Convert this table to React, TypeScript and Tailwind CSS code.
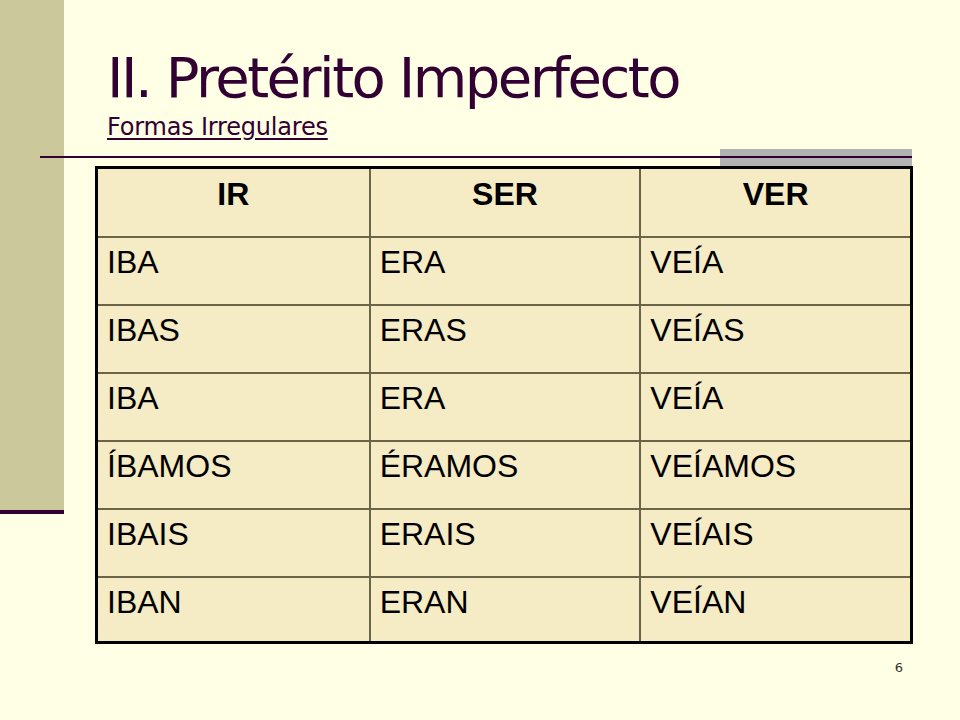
const rows = [
  ["IBA", "ERA", "VEÍA"],
  ["IBAS", "ERAS", "VEÍAS"],
  ["IBA", "ERA", "VEÍA"],
  ["ÍBAMOS", "ÉRAMOS", "VEÍAMOS"],
  ["IBAIS", "ERAIS", "VEÍAIS"],
  ["IBAN", "ERAN", "VEÍAN"],
];

export default function App() {
  return (
    <div className="w-[960px] h-[720px] bg-[#ffffe5] flex overflow-hidden">
      {/* left accent bar */}
      <div className="w-[64px] shrink-0 flex flex-col">
        <div className="h-[510px] bg-[#cbc99c]" />
        <div className="h-[4px] bg-[#330033]" />
      </div>

      <div className="flex-1 flex flex-col">
        <div className="pl-[43px] pt-[50px] text-[#330033] font-['DejaVu_Sans',sans-serif]">
          <h1 className="text-[56px] leading-none tracking-[-2.5px]">II. Pretérito Imperfecto</h1>
          <p className="mt-[9px] text-[24px] leading-none tracking-[-0.2px] underline underline-offset-[3px]">
            Formas Irregulares
          </p>
        </div>

        {/* rule + grey block */}
        <div className="mt-[10px] -ml-[24px] w-[872px] h-[17px] flex">
          <div className="flex-1 pt-[7px]">
            <div className="h-[2px] bg-[#330033]" />
          </div>
          <div className="w-[192px] bg-[#b2b2b2] pt-[7px]">
            <div className="h-[2px] bg-[#330033]" />
          </div>
        </div>

        <div className="ml-[31px] w-[818px] border-[3px] border-black bg-[#f5ebc4] font-['Liberation_Sans',Arial,sans-serif] text-[32px] leading-[38px] text-black">
          <div className="grid grid-cols-3 h-[67px]">
            {["IR", "SER", "VER"].map((h, i) => (
              <div key={h} className={`pt-[6px] text-center font-bold ${i > 0 ? "border-l-2 border-[#6b6548]" : ""}`}>
                {h}
              </div>
            ))}
          </div>
          {rows.map((r, ri) => (
            <div
              key={ri}
              className={`grid grid-cols-3 border-t-2 border-[#6b6548] ${ri === rows.length - 1 ? "h-[65px]" : "h-[68px]"}`}
            >
              {r.map((c, i) => (
                <div key={i} className={`pt-[5px] pl-[9px] ${i > 0 ? "border-l-2 border-[#6b6548]" : ""}`}>
                  {c}
                </div>
              ))}
            </div>
          ))}
        </div>

        <div className="mt-[17px] pr-[57px] text-right text-[13px] leading-none text-[#333333] font-['DejaVu_Sans',sans-serif]">
          6
        </div>
      </div>
    </div>
  );
}
